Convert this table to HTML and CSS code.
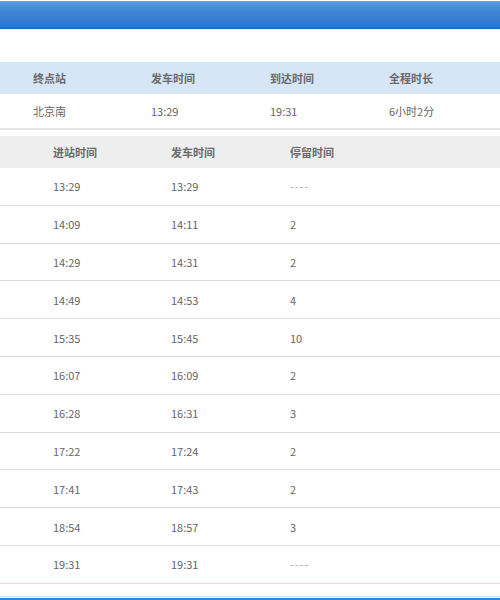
FILE: index.html
```html
<!DOCTYPE html>
<html lang="zh">
<head>
<meta charset="utf-8">
<link rel="stylesheet" href="styles.css">
</head>
<body>
<div class="page">
  <div class="topbar"></div>
  <div class="gap"></div>
  <div class="summary">
    <div class="srow shead">
      <span>终点站</span><span>发车时间</span><span>到达时间</span><span>全程时长</span>
    </div>
    <div class="srow sbody">
      <span>北京南</span><span>13:29</span><span>19:31</span><span>6小时2分</span>
    </div>
  </div>
  <div class="stops">
    <div class="trow thead">
      <span>进站时间</span><span>发车时间</span><span>停留时间</span>
    </div>
    <div class="trow"><span>13:29</span><span>13:29</span><span class="dash">----</span></div>
    <div class="trow"><span>14:09</span><span>14:11</span><span>2</span></div>
    <div class="trow"><span>14:29</span><span>14:31</span><span>2</span></div>
    <div class="trow"><span>14:49</span><span>14:53</span><span>4</span></div>
    <div class="trow"><span>15:35</span><span>15:45</span><span>10</span></div>
    <div class="trow"><span>16:07</span><span>16:09</span><span>2</span></div>
    <div class="trow"><span>16:28</span><span>16:31</span><span>3</span></div>
    <div class="trow"><span>17:22</span><span>17:24</span><span>2</span></div>
    <div class="trow"><span>17:41</span><span>17:43</span><span>2</span></div>
    <div class="trow"><span>18:54</span><span>18:57</span><span>3</span></div>
    <div class="trow last"><span>19:31</span><span>19:31</span><span class="dash">----</span></div>
  </div>
  <div class="footgap"></div>
  <div class="bottombar"></div>
</div>
</body>
</html>
```

FILE: styles.css
```css
* { box-sizing: border-box; }
html, body { margin: 0; padding: 0; background: #ffffff; }
body {
  font-family: "Noto Sans CJK SC", "Noto Sans", sans-serif;
  font-size: 11px;
  color: #666;
  width: 500px;
  height: 600px;
  overflow: hidden;
}
.page { display: flex; flex-direction: column; }
.topbar {
  margin-top: 1px;
  height: 28px;
  background: linear-gradient(#5b97dd, #3e84d6 40%, #2f74cc);
  border-top: 1px solid #6ea3de;
  border-bottom: 2px solid #2a68bb;
}
.gap {
  height: 33px;
  border-top: 1px solid #e8eef6;
}
.srow {
  display: grid;
  grid-template-columns: 118px 119px 119px 119px;
  padding-left: 33px;
  align-items: center;
}
.shead {
  height: 32px;
  background: #d7e6f6;
  color: #6a6a6a;
  font-weight: bold;
}
.sbody {
  height: 36px;
  background: #fff;
  border-bottom: 2px solid #e6e6e6;
}
.stops { margin-top: 6px; }
.trow {
  display: grid;
  grid-template-columns: 118px 119px 119px;
  padding-left: 53px;
  align-items: center;
  height: 37.8px;
  border-bottom: 1px solid #dcdcdc;
}
.thead {
  height: 32px;
  background: #eeeeee;
  border-bottom: none;
  color: #6a6a6a;
  font-weight: bold;
}
.trow.last { border-bottom: 1px solid #f3d4e4; }
.dash { color: #aaa; letter-spacing: 1px; }
.footgap { height: 13px; border-bottom: 1px solid #cfe2f3; }
.bottombar {
  margin-top: 1px;
  height: 3px;
  background: #3b7fd2;
}
```
